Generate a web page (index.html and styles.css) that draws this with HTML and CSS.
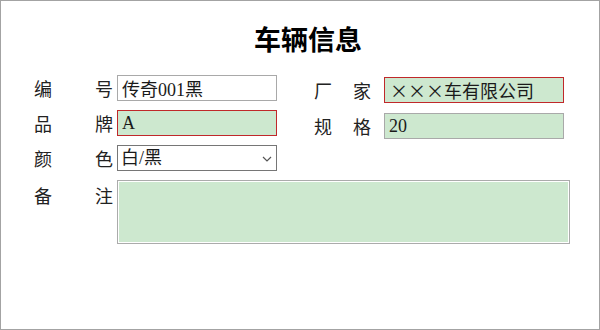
FILE: index.html
```html
<!DOCTYPE html>
<html lang="zh-CN">

<head>
    <meta charset="utf-8">
    <meta name="viewport" content="width=device-width, initial-scale=1.0">
    <title>车辆信息</title>
    <link rel="stylesheet" href="styles.css">
</head>

<body>
    <div class="frame">
        <h1 class="titel">车辆信息</h1>

        <form class="skema">
            <div class="raekke">
                <div class="felt">
                    <label class="navn">编号</label>
                    <input class="boks kort" type="text" value="传奇001黑">
                </div>
                <div class="felt hoejre">
                    <label class="navn smal">厂家</label>
                    <input class="boks lang fyldt fejl cjk" type="text" value="×××车有限公司">
                </div>
            </div>

            <div class="raekke">
                <div class="felt">
                    <label class="navn">品牌</label>
                    <input class="boks kort fyldt fejl" type="text" value="A">
                </div>
                <div class="felt hoejre">
                    <label class="navn smal">规格</label>
                    <input class="boks lang fyldt" type="text" value="20">
                </div>
            </div>

            <div class="raekke">
                <div class="felt">
                    <label class="navn">颜色</label>
                    <div class="vaelger">
                        <select class="boks kort valg">
                            <option>白/黑</option>
                            <option>红/黑</option>
                        </select>
                        <svg class="pil" width="10" height="6" viewBox="0 0 10 6">
                            <path d="M1 1 L5 5 L9 1" fill="none" stroke="#555" stroke-width="1.2"/>
                        </svg>
                    </div>
                </div>
            </div>

            <div class="raekke fri">
                <div class="felt bred">
                    <label class="navn top">备注</label>
                    <textarea class="boks fyldt note"></textarea>
                </div>
            </div>
        </form>
    </div>
</body>

</html>
```

FILE: styles.css
```css
* {
    margin: 0;
    box-sizing: border-box;
}

body {
    background-color: #ffffff;
    font-family: 'Liberation Serif', 'Noto Sans CJK SC', serif;
    color: #1a1a1a;
}

.frame {
    width: 600px;
    height: 330px;
    border: 1px solid #a3a3a3;
    padding-top: 18px;
}

.titel {
    text-align: center;
    font-family: 'Noto Sans CJK SC', sans-serif;
    font-size: 27px;
    font-weight: 700;
    line-height: 40px;
    padding-left: 16px;
    color: #000;
}

.skema {
    padding-left: 33px;
    margin-top: 16px;
}

.raekke {
    display: flex;
    align-items: flex-start;
    height: 26px;
    margin-bottom: 9px;
}

.raekke.fri {
    height: auto;
}

.felt {
    display: flex;
    align-items: center;
}

.hoejre {
    margin-left: 37px;
    margin-top: 2px;
}

.raekke:nth-child(2) .hoejre {
    margin-top: 3px;
}

.navn {
    width: 79px;
    margin-right: 4px;
    font-family: 'Noto Sans CJK SC', sans-serif;
    font-size: 18px;
    line-height: 26px;
    text-align: justify;
    text-align-last: justify;
    color: #222;
}

.navn.smal {
    width: 57px;
    margin-right: 13px;
}

.navn.top {
    align-self: flex-start;
    padding-top: 2px;
}

.boks {
    height: 26px;
    border: 1px solid #a9a9a9;
    background-color: #ffffff;
    font-family: 'Liberation Serif', 'Noto Sans CJK SC', serif;
    font-size: 18px;
    color: #1a1a1a;
    padding: 0 4px;
    outline: none;
}

.cjk {
    font-family: 'Noto Sans CJK SC', sans-serif;
    padding-left: 5px;
}

.kort {
    width: 160px;
}

.lang {
    width: 180px;
}

.fyldt {
    background-color: #cde8cf;
}

.fejl {
    border-color: #c0282a;
}

.vaelger {
    position: relative;
}

.valg {
    appearance: none;
    border-color: #767676;
    border-radius: 0;
    padding-left: 3px;
}

.pil {
    position: absolute;
    right: 5px;
    top: 11px;
}

.bred {
    align-items: flex-start;
}

.note {
    width: 453px;
    height: 64px;
    resize: none;
    border: 1px solid #ababab;
    box-shadow: inset 0 0 0 1px #ffffff;
}
```
